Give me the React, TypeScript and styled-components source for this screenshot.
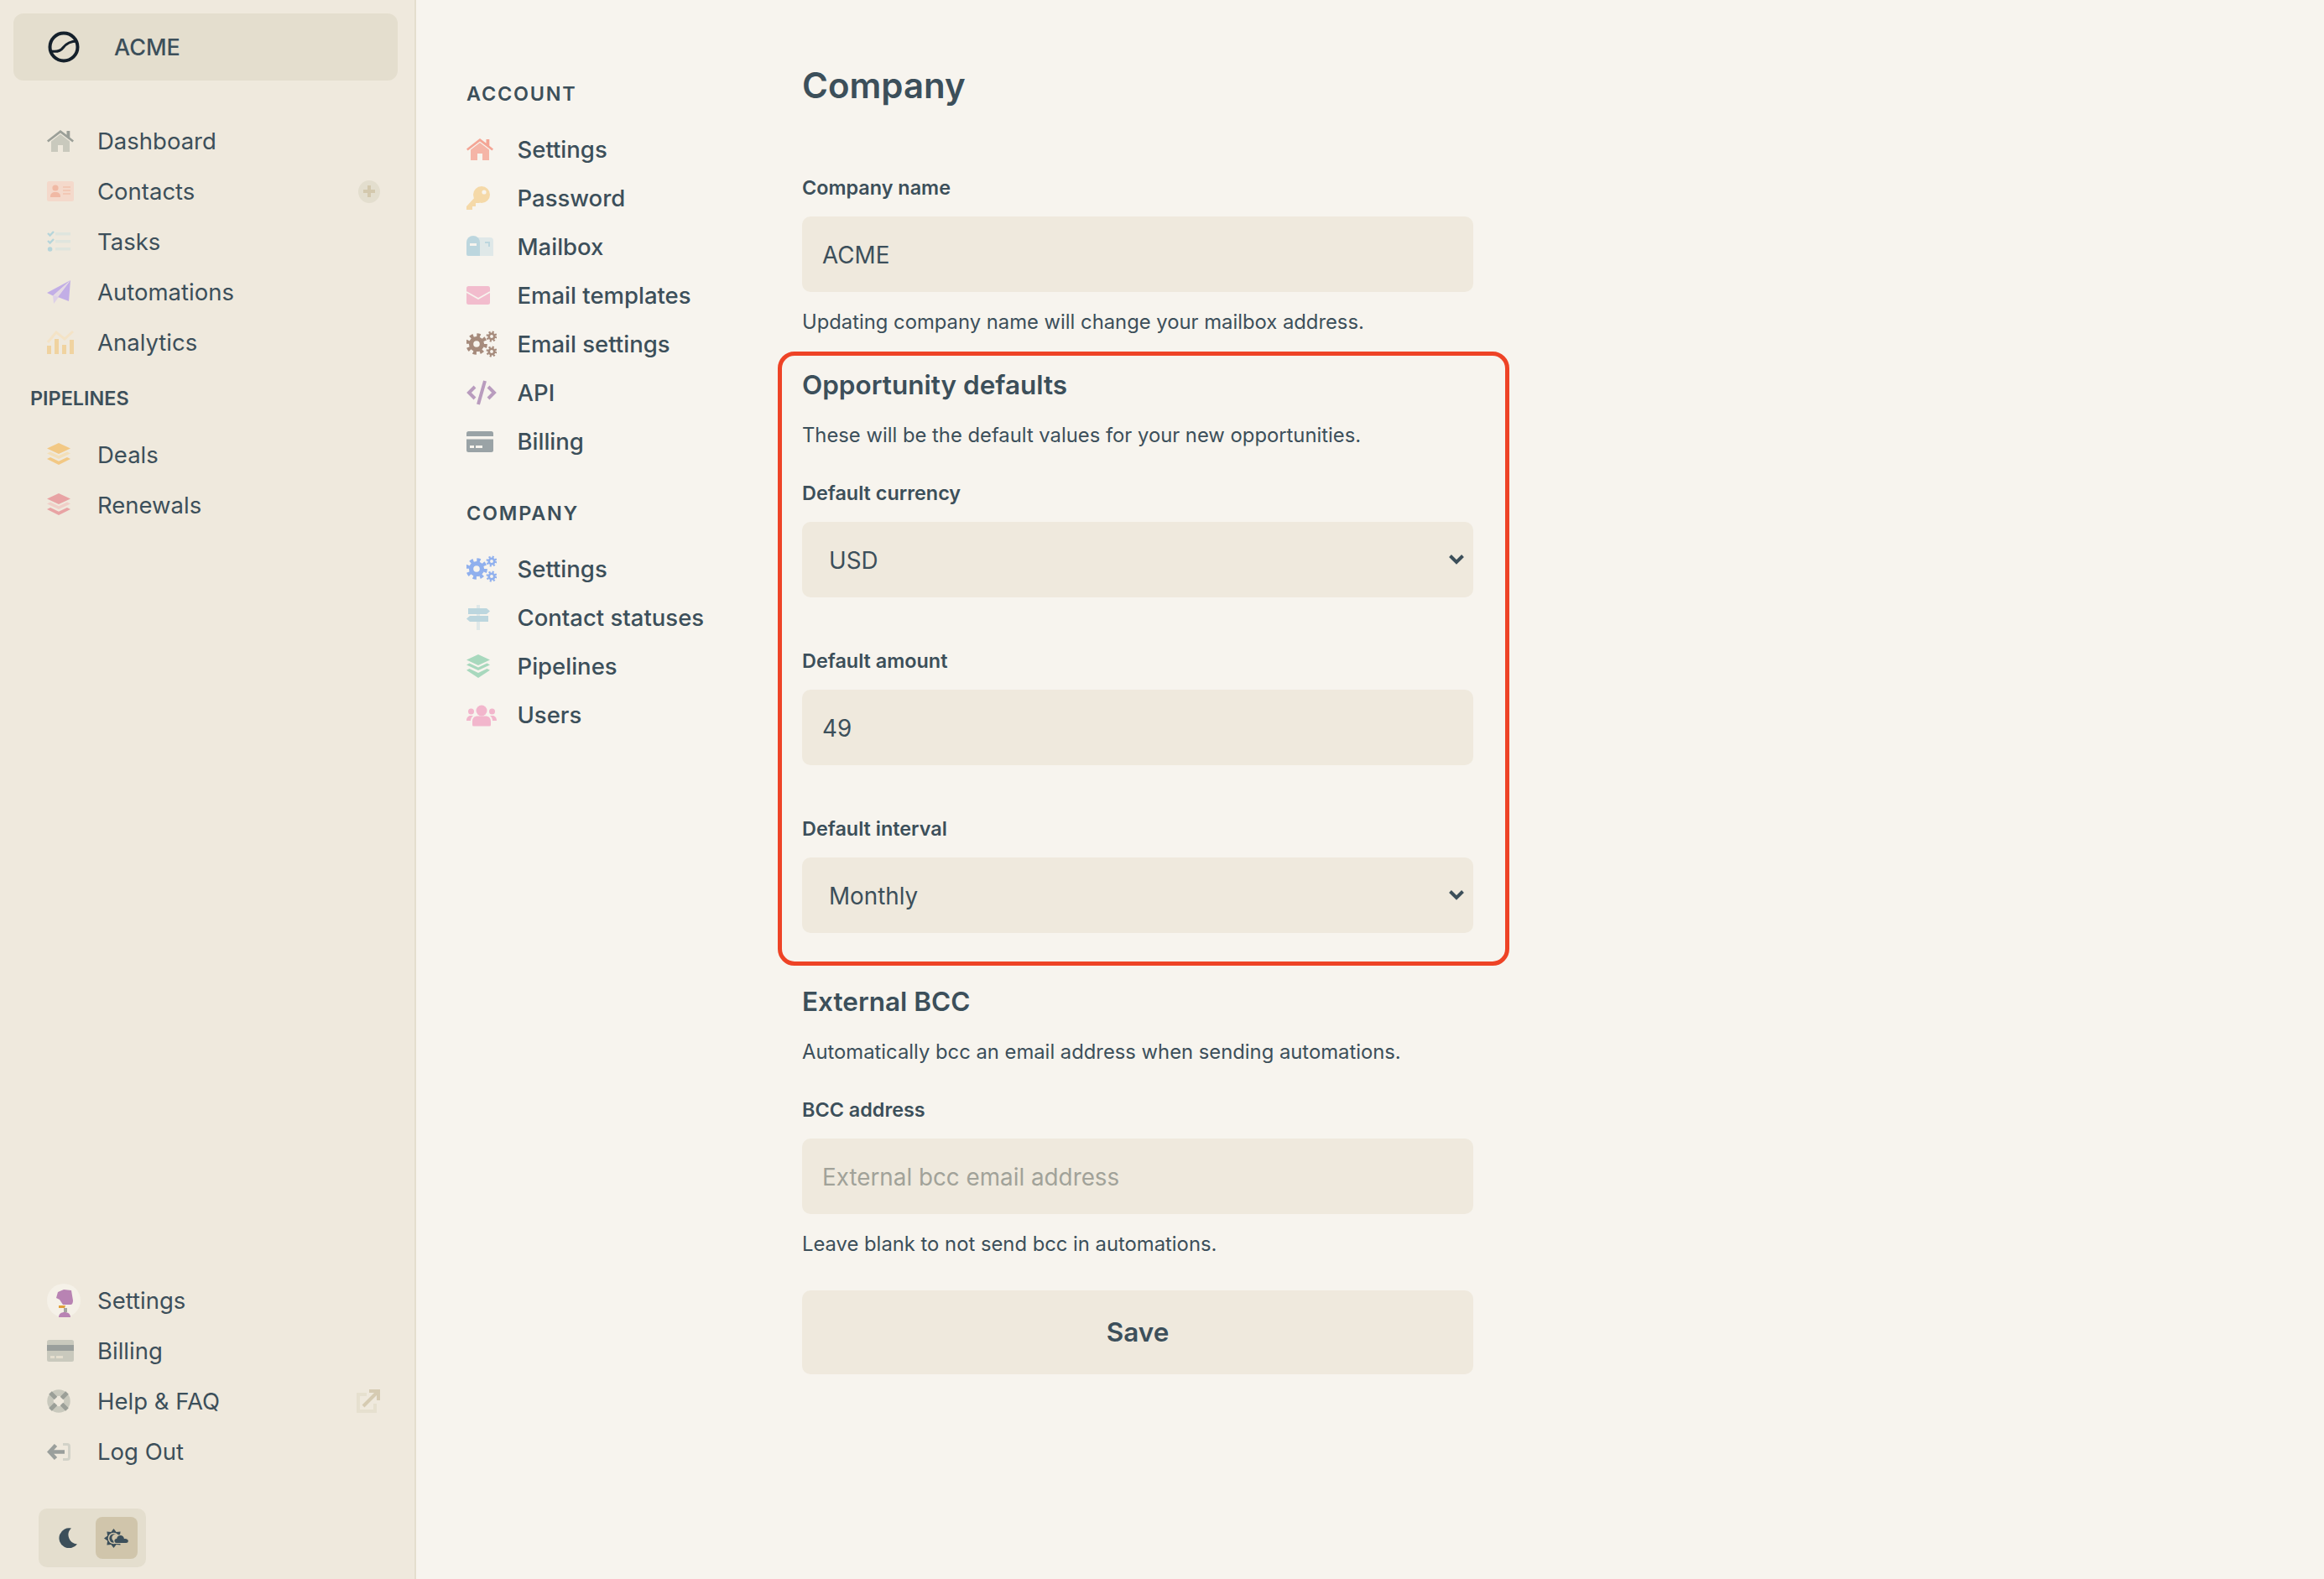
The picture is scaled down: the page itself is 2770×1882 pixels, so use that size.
import React from 'react'
import styled, { createGlobalStyle } from 'styled-components'

const GlobalStyle = createGlobalStyle`
  html, body {
    margin: 0;
    background: #f7f4ee;
    color: #3c4f5a;
    font-family: Inter, "Noto Sans", sans-serif;
  }
  * { box-sizing: border-box; }
`

const Page = styled.div`
  display: flex;
  min-height: 100vh;
`

const Sidebar = styled.aside`
  display: flex;
  flex-direction: column;
  width: 496px;
  flex: none;
  padding: 16px 20px 14px 16px;
  background: #efe9dd;
  border-right: 2px solid #e4dece;
`

const Brand = styled.div`
  display: flex;
  align-items: center;
  gap: 41px;
  height: 80px;
  padding-left: 41px;
  border-radius: 12px;
  background: #e4dece;
  font-size: 27px;
  font-weight: 500;
`

const SideNav = styled.nav<{ $top?: number }>`
  display: flex;
  flex-direction: column;
  margin-top: ${(p) => p.$top ?? 0}px;
`

const BottomNav = styled(SideNav)`
  margin-top: auto;
`

const SideRow = styled.a`
  display: flex;
  align-items: center;
  height: 60px;
  padding-left: 40px;
  padding-right: 21px;
  font-size: 27.5px;
`

const SideIcon = styled.span`
  display: flex;
  align-items: center;
  width: 60px;
  flex: none;
`

const Trailing = styled.span`
  display: flex;
  margin-left: auto;
`

const PlusBadge = styled.span`
  display: flex;
  align-items: center;
  justify-content: center;
  width: 26px;
  height: 27px;
  border-radius: 50%;
  background: #e3dece;
`

const SideHeading = styled.div`
  margin: 22px 0 22px 20px;
  font-size: 23.4px;
  line-height: 30px;
  font-weight: 600;
`

const ThemeToggle = styled.div`
  display: flex;
  align-items: center;
  justify-content: space-between;
  width: 128px;
  height: 70px;
  margin: 38px 0 0 30px;
  padding: 10px;
  border-radius: 10px;
  background: #e4dece;
`

const ThemeOption = styled.span<{ $active?: boolean }>`
  display: flex;
  align-items: center;
  justify-content: center;
  width: 50px;
  height: 50px;
  border-radius: 8px;
  background: ${(p) => (p.$active ? '#d0c5ab' : 'transparent')};
`

const Main = styled.main`
  display: flex;
  flex: 1;
  padding-left: 60px;
`

const SubNav = styled.nav`
  width: 400px;
  flex: none;
  padding-top: 97px;
`

const SubHeading = styled.div<{ $top?: number }>`
  margin-top: ${(p) => p.$top ?? 0}px;
  margin-bottom: 22px;
  font-size: 23.4px;
  line-height: 30px;
  font-weight: 600;
  letter-spacing: 1.8px;
`

const SubRow = styled.a`
  display: flex;
  align-items: center;
  height: 58px;
  font-size: 27.5px;
  font-weight: 450;
`

const SubIcon = styled.span`
  display: flex;
  align-items: center;
  width: 60.5px;
  flex: none;
`

const Content = styled.div`
  width: 800px;
  padding-top: 77px;
`

const PageTitle = styled.h1`
  margin: 0 0 82px;
  font-size: 42px;
  line-height: 50px;
  font-weight: 600;
`

const Section = styled.section`
  position: relative;
  margin-top: 40px;
  & + & {
    margin-top: 62px;
  }
`

const Annotation = styled.div`
  position: absolute;
  top: -20px;
  left: -29px;
  right: -43px;
  bottom: -39px;
  border: 5px solid #ee4326;
  border-radius: 20px;
  pointer-events: none;
`

const SectionTitle = styled.h2`
  margin: 0;
  font-size: 31.5px;
  line-height: 40px;
  font-weight: 600;
`

const Description = styled.p`
  margin: 25px 0 0;
  font-size: 23.8px;
  line-height: 30px;
`

const Field = styled.div`
  margin-top: 39px;
  & + & {
    margin-top: 61px;
  }
`

const Label = styled.label`
  display: block;
  margin-bottom: 19px;
  font-size: 23.4px;
  line-height: 30px;
  font-weight: 600;
`

const TextInput = styled.input`
  display: block;
  width: 100%;
  height: 90px;
  padding: 2px 24px 0;
  border: none;
  border-radius: 10px;
  background: #efe9dd;
  color: #3c4f5a;
  font: 400 27.8px Inter, "Noto Sans", sans-serif;
  &::placeholder {
    color: #a1a299;
    opacity: 1;
  }
`

const SelectWrap = styled.div`
  position: relative;
`

const Select = styled.select`
  display: block;
  width: 100%;
  height: 90px;
  padding: 2px 24px 0 32px;
  border: none;
  border-radius: 10px;
  background: #efe9dd;
  color: #3c4f5a;
  font: 400 27.8px Inter, "Noto Sans", sans-serif;
  appearance: none;
`

const Chevron = styled.svg`
  position: absolute;
  top: 38px;
  right: 10px;
  pointer-events: none;
`

const Hint = styled.p`
  margin: 21px 0 0;
  font-size: 23.8px;
  line-height: 30px;
`

const SaveButton = styled.button`
  display: block;
  width: 100%;
  height: 100px;
  margin-top: 40px;
  padding: 0 0 2px;
  border: none;
  border-radius: 10px;
  background: #efe9dd;
  color: #3c4f5a;
  font: 600 31.5px Inter, "Noto Sans", sans-serif;
`

type Tones = { a: string; b: string }

const Glyph: React.FC<{ w?: number; h?: number; children: React.ReactNode }> = ({ w = 32, h = 32, children }) => (
  <svg width={w} height={h} viewBox={`0 0 ${w} ${h}`} aria-hidden="true">
    {children}
  </svg>
)

const HomeIcon = ({ a, b }: Tones) => (
  <Glyph>
    <path fill={b} d="M5 16.5 16 8l11 8.5V29h-8v-8h-6v8H5z" />
    <path fill={a} d="M0 15.5 16 3l7.5 5.8V4h3.8v7.8L32 15.5l-1.6 2L16 6.6 1.6 17.5z" />
  </Glyph>
)

const ContactIcon = ({ a, b }: Tones) => (
  <Glyph>
    <rect fill={a} x="0" y="4" width="32" height="24" rx="2.5" />
    <circle fill={b} cx="10" cy="12" r="3.6" />
    <path fill={b} d="M4 22c0-3 2-5 6-5s6 2 6 5v1H4z" />
    <path fill={b} opacity=".55" d="M19 10h9v2h-9zM19 14h9v2h-9zM19 18h9v2h-9z" />
  </Glyph>
)

const TasksIcon = ({ a, b }: Tones) => (
  <Glyph w={28}>
    <path fill={a} d="M10 5h18v3.4H10zM10 14h18v3.4H10zM10 23h18v3.4H10z" />
    <path fill="none" stroke={b} strokeWidth="2.4" d="M1 6l2.6 2.6L8 4M1 15l2.6 2.6L8 13" />
    <circle fill={b} cx="3.6" cy="25" r="2.8" />
  </Glyph>
)

const PlaneIcon = ({ a, b }: Tones) => (
  <Glyph w={28}>
    <path fill={b} d="M7 20l1 10 6-8z" />
    <path fill={a} d="M28 2 0 17l7 3.500zM28 2 26 27l-13-5z" />
    <path fill={b} opacity=".6" d="M28 2 7 20.500l6 1.500z" />
  </Glyph>
)

const ChartIcon = ({ a, b }: Tones) => (
  <Glyph>
    <path fill="none" stroke={b} strokeWidth="3" d="M1 16 11 4l10 8 10-9" />
    <path fill={a} d="M0 20h5v10H0zM9 12h5v18H9zM18 19h5v11h-5zM27 13h5v17h-5z" />
  </Glyph>
)

const LayersIcon = ({ a, b }: Tones) => (
  <Glyph w={28}>
    <path fill={a} d="M14 2l14 6.500L14 15 0 8.500z" />
    <path fill={b} d="M4 12.500l10 4.700 10-4.700 4 2-14 6.500L0 14.500z" />
    <path fill={a} d="M4 19l10 4.700L24 19l4 2-14 7-14-7z" />
  </Glyph>
)

const StackIcon = ({ a }: { a: string }) => (
  <Glyph w={28}>
    <path fill={a} d="M14 2l14 6.500L14 15 0 8.500z" />
    <path fill={a} d="M3.500 12.500 14 17.500l10.500-5 3.500 2L14 21 0 14.500z" />
    <path fill={a} d="M3.500 19 14 24l10.500-5 3.500 1.800L14 30 0 20.800z" />
  </Glyph>
)

const CardIcon = ({ a, b, c }: Tones & { c: string }) => (
  <Glyph>
    <rect fill={a} x="0" y="3" width="32" height="26" rx="2.5" />
    <path fill={b} d="M0 9h32v7H0z" />
    <path fill={c} d="M4 22h5v3H4zM11 22h8v3h-8z" />
  </Glyph>
)

const FlatCardIcon = ({ a, c }: { a: string; c: string }) => (
  <Glyph>
    <rect fill={a} x="0" y="4" width="32" height="25" rx="2.5" />
    <path fill={c} d="M0 10h32v3.500H0zM4 21h5v3H4zM11 21h8v3h-8z" />
  </Glyph>
)

const BuoyIcon = ({ a, b }: Tones) => (
  <Glyph w={28}>
    <circle fill="none" stroke={a} strokeWidth="7.500" cx="14" cy="16" r="10" />
    <path fill="none" stroke={b} strokeWidth="5" d="M4 6l6.500 6.500M24 6l-6.500 6.500M4 26l6.500-6.500M24 26l-6.500-6.500" />
  </Glyph>
)

const LogoutIcon = ({ a, b }: Tones) => (
  <Glyph w={28}>
    <path fill="none" stroke={b} strokeWidth="3" d="M19 7.500h5a2.500 2.500 0 0 1 2.500 2.500v13a2.500 2.500 0 0 1-2.500 2.500h-5" />
    <path fill="none" stroke={a} strokeWidth="4.500" d="M10.500 8.500 3 16.500l7.500 8M3 16.500h18" />
  </Glyph>
)

const KeyIcon = ({ a, b }: Tones) => (
  <Glyph w={28}>
    <path fill={a} d="M12 13 0 26v4h7v-4h4v-4h4l3-2z" />
    <circle fill={a} cx="18" cy="12" r="10" />
    <circle fill={b} cx="21" cy="9" r="2.600" />
  </Glyph>
)

const MailboxIcon = ({ a, b }: Tones) => (
  <Glyph>
    <path fill={b} d="M8 5h20a4 4 0 0 1 4 4v18H8z" />
    <path fill={a} d="M0 11a8 8 0 0 1 16 0v16H2a2 2 0 0 1-2-2z" />
    <path fill="#f7f4ee" d="M4 12h8v3H4z" />
    <path fill={a} d="M22 10h6v6h-2v-4h-4z" />
  </Glyph>
)

const MailIcon = ({ a, b }: Tones) => (
  <Glyph w={28}>
    <rect fill={a} x="0" y="5" width="28" height="22" rx="2.500" />
    <path fill="none" stroke={b} strokeWidth="1.800" d="M0 12l14 8 14-8" />
  </Glyph>
)

const Gear: React.FC<{ x: number; y: number; r: number; tone: string }> = ({ x, y, r, tone }) => {
  const teeth = 2 * Math.PI * r * 1.1
  return (
    <g>
      <circle cx={x} cy={y} r={r * 0.68} fill="none" stroke={tone} strokeWidth={r * 0.56} />
      <circle
        cx={x}
        cy={y}
        r={r * 1.1}
        fill="none"
        stroke={tone}
        strokeWidth={r * 0.5}
        strokeDasharray={`${teeth / 16} ${teeth / 16}`}
      />
    </g>
  )
}

const GearsIcon = ({ a }: { a: string }) => (
  <Glyph w={36}>
    <Gear x={12} y={16} r={9.500} tone={a} />
    <Gear x={30} y={7} r={4.800} tone={a} />
    <Gear x={30} y={25} r={4.800} tone={a} />
  </Glyph>
)

const CodeIcon = ({ a }: { a: string }) => (
  <Glyph w={36}>
    <path fill="none" stroke={a} strokeWidth="4" d="M10 9l-7 7 7 7M26 9l7 7-7 7M22 2l-8 28" />
  </Glyph>
)

const SignIcon = ({ a, b }: Tones) => (
  <Glyph w={28}>
    <path fill={b} d="M12 1h4v30h-4z" />
    <path fill={a} d="M2 5h22l4 3.500-4 3.500H2zM26 14H4l-4 3.500L4 21h22z" />
  </Glyph>
)

const UsersIcon = ({ a }: { a: string }) => (
  <Glyph w={36}>
    <circle fill={a} cx="18" cy="11" r="6.500" />
    <circle fill={a} cx="5.500" cy="12" r="3.500" />
    <circle fill={a} cx="30.500" cy="12" r="3.500" />
    <path fill={a} d="M7 28v-4c0-4.500 3-6.500 6-6.500h10c3 0 6 2 6 6.500v4a1.500 1.500 0 0 1-1.500 1.500h-19A1.500 1.500 0 0 1 7 28z" />
    <path fill={a} d="M0 23c0-3.500 2-6 5-6h3c-2 1.500-3 3.500-3 6H1zM36 23c0-3.500-2-6-5-6h-3c2 1.500 3 3.500 3 6h4z" />
  </Glyph>
)

const Logo = () => (
  <svg width="38" height="38" viewBox="0 0 38 38" aria-hidden="true">
    <circle cx="19" cy="19" r="16.500" fill="none" stroke="#14202b" strokeWidth="4" />
    <path d="M4 24c6 1 11 0 14-4s8-8 17-8" fill="none" stroke="#14202b" strokeWidth="3" />
  </svg>
)

const Plus = () => (
  <svg width="16" height="16" viewBox="0 0 16 16" aria-hidden="true">
    <path fill="#d3c8ad" d="M6 1h4v5h5v4h-5v5H6v-5H1V6h5z" />
  </svg>
)

const ExternalLink = () => (
  <svg width="28" height="28" viewBox="0 0 28 28" aria-hidden="true">
    <path fill="none" stroke="#e6e0cf" strokeWidth="4" d="M12 6H2v20h20V17" />
    <path fill="none" stroke="#d6cbb2" strokeWidth="4" d="M8 20 25 3M15 2h11v11" />
  </svg>
)

const Avatar = () => (
  <svg width="40" height="40" viewBox="0 0 40 40" aria-hidden="true">
    <circle cx="20" cy="20" r="20" fill="#f5f1e8" />
    <path fill="#b883b3" d="M13 10l7-3 9 1 2 12c0 3-1 5-3 5h-9l-4-6-4-2z" />
    <path fill="#e0a03c" d="M14 26h8l-1 3h-7z" />
    <path fill="#a6a6a0" d="M20 29h4v5h-4z" />
    <path fill="#b883b3" d="M14 40c0-4 3-6 7-6s7 2 7 6z" />
  </svg>
)

const Moon = () => (
  <svg width="22" height="24" viewBox="0 0 22 24" aria-hidden="true">
    <path fill="#3c4f5a" d="M15 .5A12 12 0 1 0 22 19.500 11 11 0 0 1 15 .5z" />
  </svg>
)

const sunRays = Array.from({ length: 16 }, (_, i) => {
  const angle = (i * Math.PI) / 8
  const radius = i % 2 === 0 ? 11.5 : 8
  return `${(11.5 + radius * Math.sin(angle)).toFixed(1)},${(11.5 - radius * Math.cos(angle)).toFixed(1)}`
}).join(' ')

const SunCloud = () => (
  <svg width="30" height="23" viewBox="0 0 30 23" aria-hidden="true">
    <polygon fill="#3c4f5a" points={sunRays} />
    <circle cx="11.500" cy="11.500" r="6.800" fill="#d0c5ab" />
    <circle cx="11.500" cy="11.500" r="5.200" fill="#3c4f5a" />
    <circle cx="13.500" cy="11" r="4.200" fill="#d0c5ab" />
    <path
      fill="#3c4f5a"
      stroke="#d0c5ab"
      strokeWidth="1.200"
      d="M15 17.500a3 3 0 0 1-.4-6c.7-2.700 2.800-4 4.900-4 2.500 0 4.500 1.700 4.900 4 2.700-.3 5.100 1 5.100 3.200 0 1.800-1.400 2.800-3.200 2.800z"
    />
  </svg>
)

type NavEntry = { label: string; icon: React.ReactNode; trailing?: React.ReactNode }

const mainNav: NavEntry[] = [
  { label: 'Dashboard', icon: <HomeIcon a="#9b9f98" b="#c9c9bd" /> },
  {
    label: 'Contacts',
    icon: <ContactIcon a="#f4d9cb" b="#f0b9a4" />,
    trailing: (
      <PlusBadge>
        <Plus />
      </PlusBadge>
    ),
  },
  { label: 'Tasks', icon: <TasksIcon a="#dfe5de" b="#b6d5da" /> },
  { label: 'Automations', icon: <PlaneIcon a="#c2aee6" b="#ddd0e8" /> },
  { label: 'Analytics', icon: <ChartIcon a="#f0d3a0" b="#f4e3c6" /> },
]

const pipelines: NavEntry[] = [
  { label: 'Deals', icon: <LayersIcon a="#f2c884" b="#f3dfb9" /> },
  { label: 'Renewals', icon: <LayersIcon a="#e8a3a4" b="#f0cfc8" /> },
]

const bottomNav: NavEntry[] = [
  { label: 'Settings', icon: <Avatar /> },
  { label: 'Billing', icon: <CardIcon a="#c9c9bd" b="#9a9f9c" c="#e4dece" /> },
  { label: 'Help & FAQ', icon: <BuoyIcon a="#c9c9bd" b="#9b9f98" />, trailing: <ExternalLink /> },
  { label: 'Log Out', icon: <LogoutIcon a="#9a9f9c" b="#d2d2c8" /> },
]

const accountNav: NavEntry[] = [
  { label: 'Settings', icon: <HomeIcon a="#f4a595" b="#f5b5a7" /> },
  { label: 'Password', icon: <KeyIcon a="#f5d9a8" b="#f7f4ee" /> },
  { label: 'Mailbox', icon: <MailboxIcon a="#bcd6de" b="#dfe8e8" /> },
  { label: 'Email templates', icon: <MailIcon a="#f2bccd" b="#f7f4ee" /> },
  { label: 'Email settings', icon: <GearsIcon a="#a68b7c" /> },
  { label: 'API', icon: <CodeIcon a="#b99cbe" /> },
  { label: 'Billing', icon: <FlatCardIcon a="#9aa3a6" c="#f7f4ee" /> },
]

const companyNav: NavEntry[] = [
  { label: 'Settings', icon: <GearsIcon a="#90b0ee" /> },
  { label: 'Contact statuses', icon: <SignIcon a="#bcd6de" b="#dfe8e8" /> },
  { label: 'Pipelines', icon: <StackIcon a="#a8d8bd" /> },
  { label: 'Users', icon: <UsersIcon a="#f2b6cc" /> },
]

const SideLinks: React.FC<{ items: NavEntry[] }> = ({ items }) => (
  <>
    {items.map((item) => (
      <SideRow key={item.label}>
        <SideIcon>{item.icon}</SideIcon>
        {item.label}
        {item.trailing && <Trailing>{item.trailing}</Trailing>}
      </SideRow>
    ))}
  </>
)

const SubLinks: React.FC<{ items: NavEntry[] }> = ({ items }) => (
  <>
    {items.map((item) => (
      <SubRow key={item.label}>
        <SubIcon>{item.icon}</SubIcon>
        {item.label}
      </SubRow>
    ))}
  </>
)

const SelectField: React.FC<{ label: string; value: string; options: string[] }> = ({ label, value, options }) => (
  <Field>
    <Label>{label}</Label>
    <SelectWrap>
      <Select defaultValue={value}>
        {options.map((option) => (
          <option key={option}>{option}</option>
        ))}
      </Select>
      <Chevron width="20" height="14" viewBox="0 0 20 14" aria-hidden="true">
        <path fill="none" stroke="#3c4f5a" strokeWidth="4" d="M2.500 2.500 10 10l7.500-7.500" />
      </Chevron>
    </SelectWrap>
  </Field>
)

export default function App() {
  return (
    <Page>
      <GlobalStyle />
      <Sidebar>
        <Brand>
          <Logo />
          ACME
        </Brand>
        <SideNav $top={42}>
          <SideLinks items={mainNav} />
        </SideNav>
        <SideHeading>PIPELINES</SideHeading>
        <SideNav>
          <SideLinks items={pipelines} />
        </SideNav>
        <BottomNav>
          <SideLinks items={bottomNav} />
        </BottomNav>
        <ThemeToggle>
          <ThemeOption>
            <Moon />
          </ThemeOption>
          <ThemeOption $active>
            <SunCloud />
          </ThemeOption>
        </ThemeToggle>
      </Sidebar>
      <Main>
        <SubNav>
          <SubHeading>ACCOUNT</SubHeading>
          <SubLinks items={accountNav} />
          <SubHeading $top={42}>COMPANY</SubHeading>
          <SubLinks items={companyNav} />
        </SubNav>
        <Content>
          <PageTitle>Company</PageTitle>
          <Field>
            <Label>Company name</Label>
            <TextInput defaultValue="ACME" />
            <Hint>Updating company name will change your mailbox address.</Hint>
          </Field>
          <Section>
            <Annotation />
            <SectionTitle>Opportunity defaults</SectionTitle>
            <Description>These will be the default values for your new opportunities.</Description>
            <SelectField label="Default currency" value="USD" options={['USD', 'EUR', 'GBP']} />
            <Field>
              <Label>Default amount</Label>
              <TextInput defaultValue="49" />
            </Field>
            <SelectField label="Default interval" value="Monthly" options={['Monthly', 'Yearly']} />
          </Section>
          <Section>
            <SectionTitle>External BCC</SectionTitle>
            <Description>Automatically bcc an email address when sending automations.</Description>
            <Field>
              <Label>BCC address</Label>
              <TextInput placeholder="External bcc email address" />
              <Hint>Leave blank to not send bcc in automations.</Hint>
            </Field>
            <SaveButton>Save</SaveButton>
          </Section>
        </Content>
      </Main>
    </Page>
  )
}
